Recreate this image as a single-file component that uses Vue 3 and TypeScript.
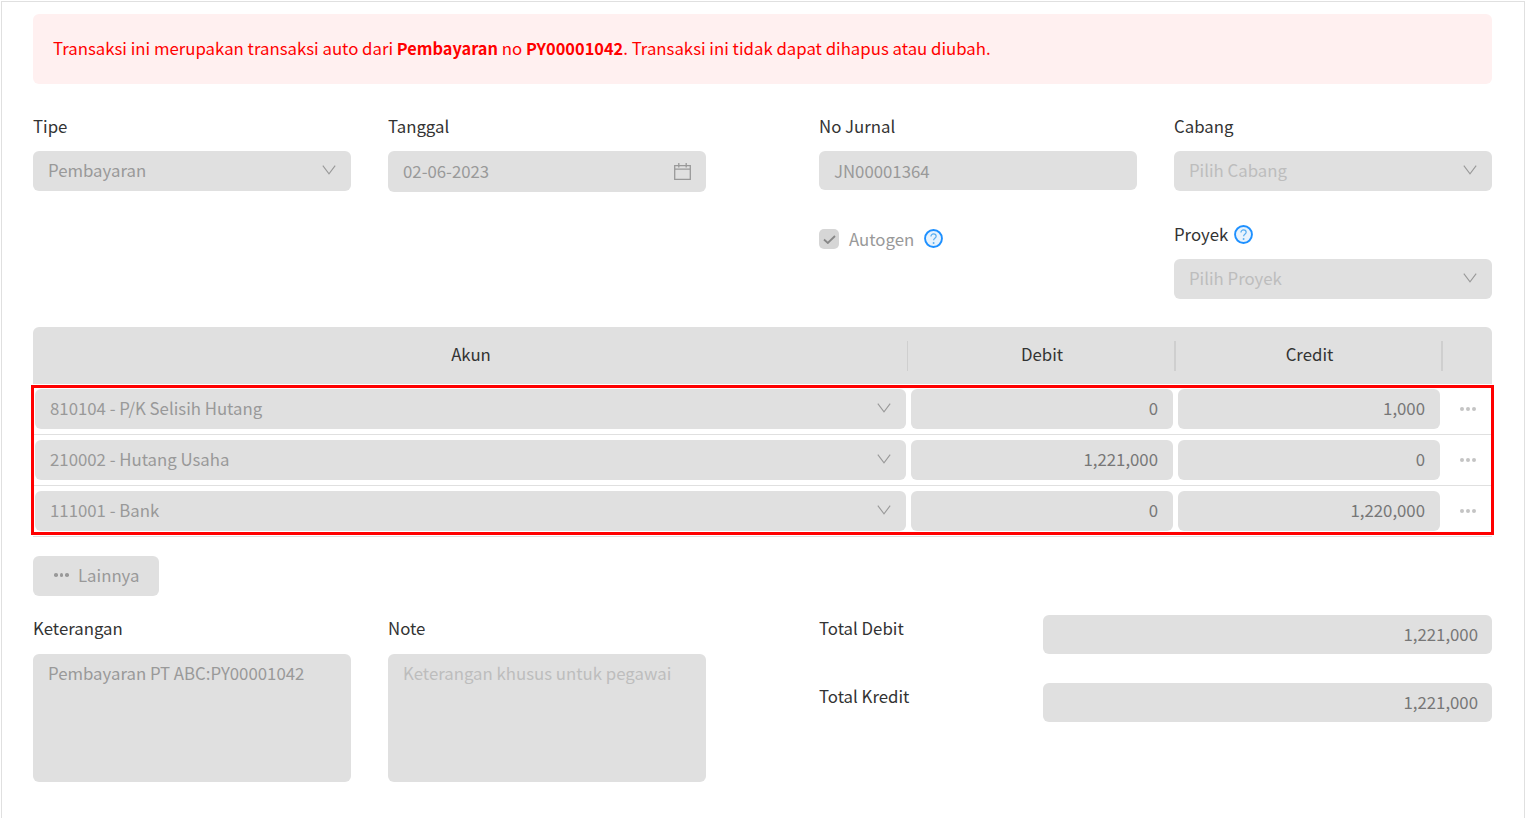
<script setup lang="ts">
interface JournalRow {
  akun: string
  debit: string
  credit: string
}

const rows: JournalRow[] = [
  { akun: '810104 - P/K Selisih Hutang', debit: '0', credit: '1,000' },
  { akun: '210002 - Hutang Usaha', debit: '1,221,000', credit: '0' },
  { akun: '111001 - Bank', debit: '0', credit: '1,220,000' },
]
</script>

<template>
  <div class="page">
    <div class="alert">
      Transaksi ini merupakan transaksi auto dari <b>Pembayaran</b> no <b>PY00001042</b>. Transaksi ini tidak dapat dihapus atau diubah.
    </div>

    <div class="top-grid">
      <div class="field">
        <label>Tipe</label>
        <div class="control select">
          <span>Pembayaran</span>
          <svg class="chev" viewBox="0 0 15 11"><path d="M.7.7l6.800 9 6.800-9" /></svg>
        </div>
      </div>
      <div class="field">
        <label>Tanggal</label>
        <div class="control date">
          <span>02-06-2023</span>
          <svg class="cal" viewBox="0 0 17 18">
            <path d="M.7 3.700h15.600v13.600H.7zM.7 7.200h15.600M4.800 1v4.500M12.200 1v4.500" />
          </svg>
        </div>
      </div>
      <div class="field third">
        <label>No Jurnal</label>
        <div class="control jurnal"><span>JN00001364</span></div>
        <div class="autogen">
          <span class="check">
            <svg viewBox="0 0 13 9"><path d="M1 4.500l3.800 3.500L12 1" /></svg>
          </span>
          <span class="autogen-text">Autogen</span>
          <svg class="help" viewBox="0 0 20 20">
            <circle class="help-ring" cx="10" cy="10" r="8.900" />
            <path d="M7.300 7.900c0-1.700 1.200-2.800 2.800-2.800s2.700 1 2.700 2.500c0 2.200-2.700 2.200-2.700 4.300" />
            <circle class="help-dot" cx="10.100" cy="14.700" r="1" />
          </svg>
        </div>
      </div>
      <div class="field">
        <label>Cabang</label>
        <div class="control select">
          <span class="placeholder">Pilih Cabang</span>
          <svg class="chev" viewBox="0 0 15 11"><path d="M.7.7l6.800 9 6.800-9" /></svg>
        </div>
        <div class="proyek-label">
          <label>Proyek</label>
          <svg class="help" viewBox="0 0 20 20">
            <circle class="help-ring" cx="10" cy="10" r="8.900" />
            <path d="M7.300 7.900c0-1.700 1.200-2.800 2.800-2.800s2.700 1 2.700 2.500c0 2.200-2.700 2.200-2.700 4.300" />
            <circle class="help-dot" cx="10.100" cy="14.700" r="1" />
          </svg>
        </div>
        <div class="control select">
          <span class="placeholder">Pilih Proyek</span>
          <svg class="chev" viewBox="0 0 15 11"><path d="M.7.7l6.800 9 6.800-9" /></svg>
        </div>
      </div>
    </div>

    <div class="table">
      <div class="thead">
        <div class="th">Akun</div>
        <div class="th">Debit</div>
        <div class="th">Credit</div>
        <div class="th last"></div>
      </div>
      <div class="tbody">
        <div v-for="row in rows" :key="row.akun" class="tr">
          <div class="td first">
            <div class="control select">
              <span>{{ row.akun }}</span>
              <svg class="chev" viewBox="0 0 15 11"><path d="M.7.7l6.800 9 6.800-9" /></svg>
            </div>
          </div>
          <div class="td"><div class="control num">{{ row.debit }}</div></div>
          <div class="td"><div class="control num">{{ row.credit }}</div></div>
          <div class="td more"><span class="dots"><i></i><i></i><i></i></span></div>
        </div>
        <div class="highlight"></div>
      </div>
    </div>

    <button class="more-btn" type="button" disabled>
      <span class="dots small"><i></i><i></i><i></i></span>
      Lainnya
    </button>

    <div class="bottom-grid">
      <div class="field notes">
        <label>Keterangan</label>
        <div class="control area">Pembayaran PT ABC:PY00001042</div>
      </div>
      <div class="field notes">
        <label>Note</label>
        <div class="control area"><span class="placeholder">Keterangan khusus untuk pegawai</span></div>
      </div>
      <div class="totals">
        <div class="total-row">
          <label>Total Debit</label>
          <div class="control num total">1,221,000</div>
        </div>
        <div class="total-row">
          <label>Total Kredit</label>
          <div class="control num total">1,221,000</div>
        </div>
      </div>
    </div>
  </div>
</template>

<style>
html,
body {
  margin: 0;
  background: #fff;
}
</style>

<style scoped>
.page {
  box-sizing: border-box;
  width: 1524px;
  height: 817px;
  margin-left: 1px;
  margin-top: 1px;
  padding: 12px 32px 0 31px;
  border-top: 1px solid #e0e0e0;
  border-left: 1px solid #e0e0e0;
  border-right: 1px solid #e0e0e0;
  font-family: 'Noto Sans CJK JP', 'Noto Sans', sans-serif;
  font-size: 16.8px;
  line-height: 24px;
  color: #333;
  overflow: hidden;
}

.alert {
  height: 70px;
  box-sizing: border-box;
  padding: 22px 20px;
  background: #fff0f0;
  border-radius: 6px;
  color: #f00;
}

.alert b {
  font-weight: 700;
  font-size: 16.35px;
}

.top-grid {
  display: grid;
  grid-template-columns: 318px 318px 39px 318px 318px;
  column-gap: 37px;
  margin-top: 30px;
  height: 213px;
}

.third {
  grid-column: 4;
}

.field label {
  display: block;
  height: 24px;
  margin-bottom: 13px;
}

.control {
  box-sizing: border-box;
  height: 40px;
  background: #e0e0e0;
  border-radius: 6px;
  color: #999;
  display: flex;
  align-items: center;
  padding: 0 15px 2px;
}

.select {
  justify-content: space-between;
}

.date {
  height: 41px;
  justify-content: space-between;
}

.jurnal {
  height: 39px;
  margin-top: 1px;
  padding-bottom: 0;
}

.placeholder {
  color: #bdbdbd;
}

.chev {
  width: 14px;
  height: 10px;
  fill: none;
  stroke: #999;
  stroke-width: 1.2;
}

.cal {
  width: 17px;
  height: 18px;
  fill: none;
  stroke: #999;
  stroke-width: 1.300;
}

.autogen {
  display: flex;
  align-items: center;
  height: 24px;
  margin-top: 37px;
}

.check {
  width: 20px;
  height: 20px;
  border-radius: 5px;
  background: #d6d6d6;
  display: flex;
  align-items: center;
  justify-content: center;
}

.check svg {
  width: 13px;
  height: 9px;
  fill: none;
  stroke: #888;
  stroke-width: 1.800;
}

.autogen-text {
  margin-left: 10px;
  color: #999;
}

.help {
  width: 19px;
  height: 19px;
  margin: 0 0 1px 10px;
  fill: none;
  stroke: #5aaef0;
  stroke-width: 1.300;
}

.help-ring {
  fill: #e8f3fd;
  stroke: #1e90ff;
  stroke-width: 2;
}

.help-dot {
  fill: #5aaef0;
  stroke: none;
}

.proyek-label {
  display: flex;
  align-items: center;
  margin-top: 31px;
  margin-bottom: 13px;
}

.proyek-label label {
  margin: 0;
}

.proyek-label .help {
  margin: 1px 0 0 6px;
}

.thead {
  display: grid;
  grid-template-columns: 875px 268px 267px 49px;
  height: 57px;
  background: #e0e0e0;
  border-radius: 6px 6px 0 0;
  align-items: center;
}

.th {
  box-sizing: border-box;
  height: 30px;
  padding-left: 2px;
  line-height: 26px;
  text-align: center;
  border-right: 2px solid #cfcfcf;
}

.th:first-child {
  border-right-width: 1px;
}

.th.last {
  border-right: 0;
}

.tbody {
  position: relative;
}

.tr {
  display: grid;
  grid-template-columns: 875px 267px 267px 50px;
  height: 51px;
  box-sizing: border-box;
  border-bottom: 1px solid #e0e0e0;
  padding-top: 5px;
}

.td {
  padding: 0 2px 0 3px;
}

.td.first {
  padding-left: 2px;
}

.num {
  justify-content: flex-end;
  color: #777;
}

.more {
  display: flex;
  align-items: center;
  justify-content: center;
  height: 40px;
}

.dots {
  display: inline-flex;
  gap: 2px;
}

.dots i {
  width: 4px;
  height: 4px;
  background: #c4c4c4;
  border-radius: 50%;
}

.dots.small i {
  background: #999;
  width: 3.670px;
  height: 3.670px;
}

.highlight {
  position: absolute;
  left: -2px;
  right: -2px;
  top: 1px;
  height: 150px;
  box-sizing: border-box;
  border: 3px solid #f00;
  pointer-events: none;
}

.more-btn {
  display: flex;
  align-items: center;
  gap: 9px;
  box-sizing: border-box;
  width: 126px;
  height: 40px;
  margin-top: 19px;
  padding: 0 0 2px 21px;
  border: 0;
  border-radius: 6px;
  background: #e0e0e0;
  color: #999;
  font: inherit;
}

.bottom-grid {
  display: grid;
  grid-template-columns: 318px 318px 39px 673px;
  column-gap: 37px;
  margin-top: 19px;
}

.notes label {
  margin-bottom: 14px;
  margin-top: 1px;
}

.area {
  height: 128px;
  align-items: flex-start;
  padding-top: 7px;
}

.totals {
  grid-column: 4;
}

.total-row {
  display: flex;
  justify-content: space-between;
  height: 68px;
}

.total-row label {
  padding-top: 1px;
}

.total {
  width: 449px;
  height: 39px;
  padding-right: 14px;
}
</style>
